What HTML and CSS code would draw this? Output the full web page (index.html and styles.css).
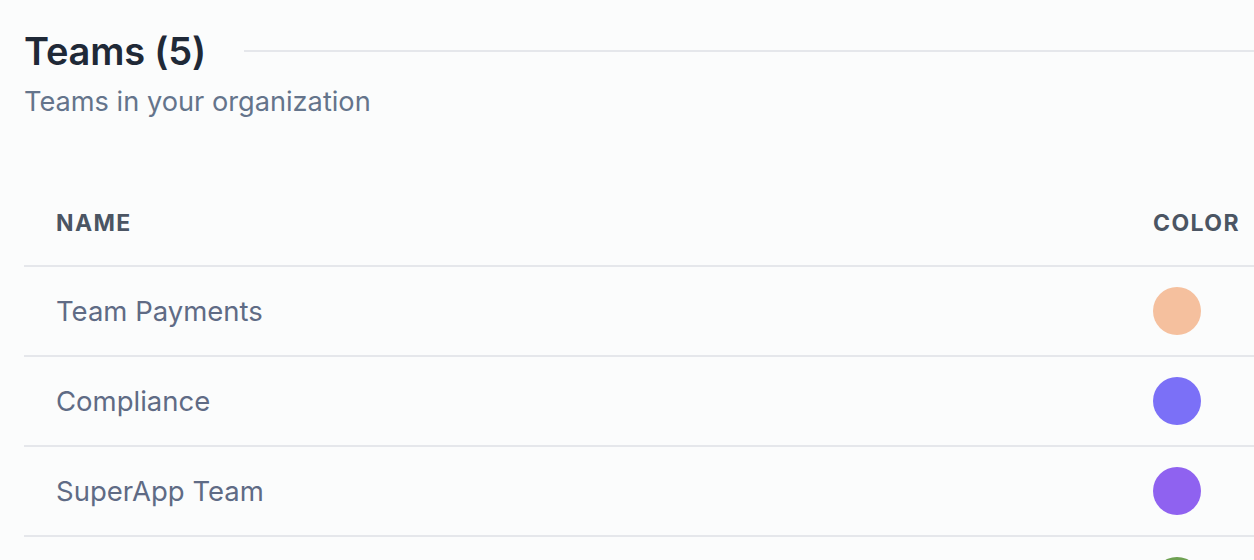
FILE: index.html
```html
<!DOCTYPE html>
<html>
<head>
<meta charset="utf-8">
<link rel="stylesheet" href="styles.css">
</head>
<body>
<main class="page">
  <header class="section-head">
    <div class="title-row">
      <h1 class="title">Teams (5)</h1>
      <div class="rule"></div>
    </div>
    <p class="subtitle">Teams in your organization</p>
  </header>
  <table class="teams">
    <thead>
      <tr>
        <th class="col-name">Name</th>
        <th class="col-color">Color</th>
      </tr>
    </thead>
    <tbody>
      <tr>
        <td class="col-name">Team Payments</td>
        <td class="col-color"><span class="dot" style="background:#f5c09e"></span></td>
      </tr>
      <tr>
        <td class="col-name">Compliance</td>
        <td class="col-color"><span class="dot" style="background:#7b70f7"></span></td>
      </tr>
      <tr>
        <td class="col-name">SuperApp Team</td>
        <td class="col-color"><span class="dot" style="background:#8f62f0"></span></td>
      </tr>
      <tr>
        <td class="col-name">Mobile</td>
        <td class="col-color"><span class="dot" style="background:#6ea152"></span></td>
      </tr>
      <tr>
        <td class="col-name">Platform</td>
        <td class="col-color"><span class="dot" style="background:#f59e0b"></span></td>
      </tr>
    </tbody>
  </table>
</main>
</body>
</html>
```
FILE: styles.css
```css
html, body {
  margin: 0;
  padding: 0;
  background: #fbfcfc;
  overflow: hidden;
}
body {
  font-family: Inter, "Liberation Sans", sans-serif;
  height: 560px;
}
.page {
  padding: 28px 0 0 24px;
  width: 1300px;
}
.title-row {
  display: flex;
  align-items: center;
  gap: 38px;
}
.title {
  margin: 0;
  font-size: 38px;
  line-height: 46px;
  font-weight: 600;
  color: #1f2937;
  letter-spacing: -0.2px;
}
.rule {
  flex: 1;
  height: 2px;
  background: #e5e7eb;
}
.subtitle {
  margin: 10px 0 0;
  font-size: 27.2px;
  line-height: 36px;
  color: #64748b;
}
.teams {
  margin-top: 57px;
  border-collapse: collapse;
  width: 1281px;
}
.teams th {
  text-align: left;
  font-size: 23px;
  font-weight: 700;
  text-transform: uppercase;
  letter-spacing: 1.4px;
  color: #4b5563;
  height: 84px;
  padding: 4px 32px 0;
  border-bottom: 2px solid #e5e7eb;
}
.teams td {
  height: 88px;
  padding: 0 32px;
  font-size: 27.5px;
  color: #5f6b85;
  border-bottom: 2px solid #e5e7eb;
}
.col-color {
  width: 120px;
}
.dot {
  display: block;
  width: 48px;
  height: 48px;
  border-radius: 50%;
}
```
